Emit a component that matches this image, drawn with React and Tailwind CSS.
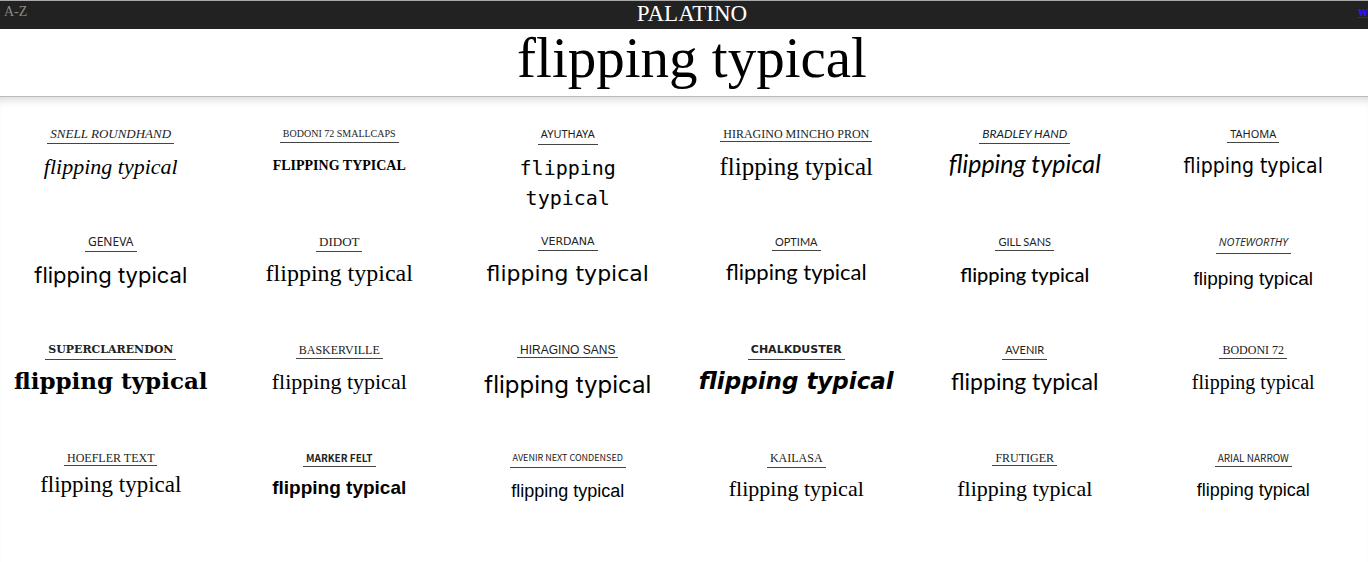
import React from 'react';

// label / sample hold the type classes of each specimen
const fonts = [
    { name: 'Snell Roundhand', label: 'font-["Liberation_Serif",serif] italic text-[13px] pb-[3px]', sample: 'font-["Liberation_Serif",serif] italic text-[22px] mt-2' },
    { name: 'Bodoni 72 Smallcaps', label: 'font-["Liberation_Serif",serif] text-[10px] pb-0.5', sample: 'font-["Liberation_Serif",serif] font-bold uppercase text-[14px] mt-2' },
    { name: 'Ayuthaya', label: 'font-["Noto_Sans",sans-serif] text-[11px] pb-1', sample: 'font-["DejaVu_Sans_Mono",monospace] text-[20px] mt-2' },
    { name: 'Hiragino Mincho ProN', label: 'font-["Liberation_Serif",serif] text-[12px] pb-px', sample: 'font-["Liberation_Serif",serif] text-[25px] mt-2.5' },
    { name: 'Bradley Hand', label: 'font-["Lato",sans-serif] italic text-[12px] pb-[3px]', sample: 'font-["Lato",sans-serif] italic text-[25px] mt-1' },
    { name: 'Tahoma', label: 'font-["Noto_Sans",sans-serif] text-[11px] pb-0.5', sample: 'font-["DejaVu_Sans_Condensed","DejaVu_Sans",sans-serif] text-[21px] mt-2' },

    { name: 'Geneva', label: 'font-["Noto_Sans",sans-serif] text-[12px] pb-[3px]', sample: 'font-["Inter",sans-serif] text-[22px] mt-2' },
    { name: 'Didot', label: 'font-["Liberation_Serif",serif] text-[13px] pb-[3px]', sample: 'font-["Liberation_Serif",serif] text-[24px] mt-1.5' },
    { name: 'Verdana', label: 'font-["DejaVu_Sans",sans-serif] text-[11px] pb-0.5', sample: 'font-["DejaVu_Sans",sans-serif] text-[22px] mt-2' },
    { name: 'Optima', label: 'font-["Lato",sans-serif] text-[11px] pb-0.5', sample: 'font-["Lato",sans-serif] text-[22px] mt-1.5' },
    { name: 'Gill Sans', label: 'font-["Lato",sans-serif] text-[11px] pb-0.5', sample: 'font-["Lato",sans-serif] font-medium text-[20px] mt-2' },
    { name: 'Noteworthy', label: 'font-["Open_Sans",sans-serif] italic text-[11px] pb-[5px]', sample: 'font-["Liberation_Sans",sans-serif] text-[19px] mt-2.5' },

    { name: 'Superclarendon', label: 'font-["DejaVu_Serif",serif] font-bold text-[11px] pb-[3px]', sample: 'font-["DejaVu_Serif",serif] font-bold text-[23px] whitespace-nowrap mt-1.5' },
    { name: 'Baskerville', label: 'font-["Liberation_Serif",serif] text-[12px] pb-0.5', sample: 'font-["Liberation_Serif",serif] text-[22px] mt-2' },
    { name: 'Hiragino Sans', label: 'font-["Liberation_Sans",sans-serif] text-[12px] pb-px', sample: 'font-["Inter",sans-serif] text-[24px] mt-3' },
    { name: 'Chalkduster', label: 'font-["DejaVu_Sans",sans-serif] font-bold text-[11px] pb-[3px]', sample: 'font-["DejaVu_Sans",sans-serif] font-bold italic text-[23px] whitespace-nowrap mt-1.5' },
    { name: 'Avenir', label: 'font-["Lato",sans-serif] text-[11px] pb-[3px]', sample: 'font-["Lato",sans-serif] text-[23px] mt-1.5' },
    { name: 'Bodoni 72', label: 'font-["Liberation_Serif",serif] text-[12px] pb-0.5', sample: 'font-["Liberation_Serif",serif] text-[20px] mt-2' },

    { name: 'Hoefler Text', label: 'font-["Liberation_Serif",serif] text-[12px] pb-px', sample: 'font-["Liberation_Serif",serif] text-[23px] mt-1' },
    { name: 'Marker Felt', label: 'font-["Noto_Sans_CJK_SC",sans-serif] font-bold text-[10px] pb-0.5', sample: 'font-["Liberation_Sans",sans-serif] font-bold text-[19px] mt-1.5' },
    { name: 'Avenir Next Condensed', label: 'font-["Noto_Sans_CJK_SC",sans-serif] text-[9px] pb-[3px]', sample: 'font-["Liberation_Sans",sans-serif] text-[18px] mt-2' },
    { name: 'Kailasa', label: 'font-["Liberation_Serif",serif] text-[12px] pb-[3px]', sample: 'font-["Liberation_Serif",serif] text-[22px] mt-1.5' },
    { name: 'Frutiger', label: 'font-["Liberation_Serif",serif] text-[12px] pb-px', sample: 'font-["Liberation_Serif",serif] text-[22px] mt-2' },
    { name: 'Arial Narrow', label: 'font-["Noto_Sans_CJK_SC",sans-serif] text-[10px] pb-0.5', sample: 'font-["Liberation_Sans",sans-serif] text-[18px] mt-2' },
];

const Specimen = ({ font, text }) => (
    <li className="flex min-h-[108px] flex-col items-center px-4 text-center">
        <h2 className={`whitespace-nowrap border-b border-[#444] px-[3px] uppercase leading-3 text-[#222] ${font.label}`}>
            {font.name}
        </h2>
        <p className={`leading-[30px] text-black ${font.sample}`}>{text}</p>
    </li>
);

const App = () => {
    const text = 'flipping typical';

    return (
        <div className='min-h-screen overflow-x-hidden bg-white font-["Liberation_Serif",serif]'>
            <header>
                {/* Top bar */}
                <div className="grid h-[29px] grid-cols-3 items-start overflow-hidden border-t border-[#aaa] bg-[#222]">
                    <a href="#a-z" className="justify-self-start pl-1 text-[14px] leading-[22px] text-[#888]">A-Z</a>
                    <span className="justify-self-center pl-4 text-[23px] leading-[26px] text-white">PALATINO</span>
                    <a href="#w" className='w-2.5 justify-self-end font-["DejaVu_Serif",serif] text-[12px] font-bold leading-[22px] text-[#31f] underline'>w</a>
                </div>
                <h1 className="h-[68px] border-b border-[#bbb] pl-4 text-center text-[57px] leading-[58px] text-black">{text}</h1>
            </header>

            {/* Specimens */}
            <main className="min-h-[calc(100vh-97px)] pt-[31px] shadow-[inset_0_9px_10px_-7px_rgba(0,0,0,0.18)]">
                <ul className="grid grid-cols-6 gap-x-[7px] pr-1">
                    {fonts.map(font => (
                        <Specimen key={font.name} font={font} text={text} />
                    ))}
                </ul>
            </main>
        </div>
    );
};

export default App;
